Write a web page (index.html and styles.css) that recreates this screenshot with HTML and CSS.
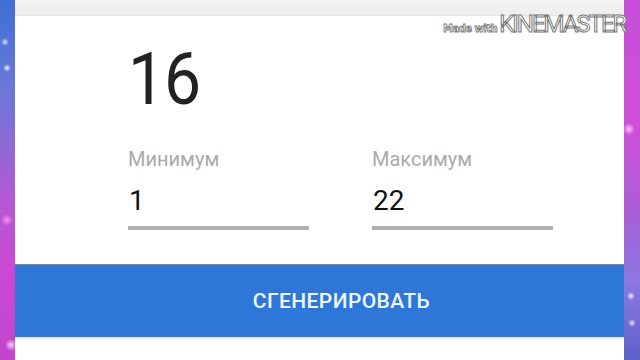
FILE: index.html
```html
<!DOCTYPE html>
<html lang="ru">
<head>
<meta charset="utf-8">
<title>Генератор</title>
<link rel="stylesheet" href="styles.css">
</head>
<body>
<div class="screen">
  <div class="side side-left"></div>
  <main class="app">
    <div class="topbar"></div>
    <section class="content">
      <div class="result">16</div>
      <div class="fields">
        <div class="field">
          <div class="label">Минимум</div>
          <div class="value">1</div>
          <div class="underline"></div>
        </div>
        <div class="field">
          <div class="label">Максимум</div>
          <div class="value">22</div>
          <div class="underline"></div>
        </div>
      </div>
    </section>
    <button class="generate">СГЕНЕРИРОВАТЬ</button>
    <div class="bottom"></div>
  </main>
  <div class="side side-right"></div>
  <div class="watermark"><span class="wm-small">Made with</span><span class="wm-big">KINEMASTER</span></div>
</div>
</body>
</html>
```

FILE: styles.css
```css
html, body {
  margin: 0;
  padding: 0;
  width: 640px;
  height: 360px;
  overflow: hidden;
  background: #fff;
  font-family: Roboto, "Noto Sans", Arial, sans-serif;
}
.screen {
  position: relative;
  display: flex;
  width: 640px;
  height: 360px;
}
.side {
  flex: none;
  height: 360px;
}
.side-left {
  width: 15px;
  background:
    radial-gradient(circle at 5px 42px, rgba(255,255,255,0.75) 0, rgba(255,255,255,0) 4px),
    radial-gradient(circle at 7px 68px, rgba(255,255,255,0.9) 0, rgba(255,255,255,0) 4px),
    radial-gradient(circle at 7px 220px, rgba(255,160,255,0.8) 0, rgba(255,160,255,0) 6px),
    radial-gradient(circle at 11px 345px, rgba(255,220,255,0.9) 0, rgba(255,220,255,0) 6px),
    linear-gradient(to bottom, #3f6fd6 0%, #6a78d8 25%, #b25ad4 55%, #cc48d0 75%, #c245cc 100%);
}
.side-right {
  width: 16px;
  background:
    radial-gradient(circle at 5px 129px, rgba(255,200,255,0.9) 0, rgba(255,200,255,0) 6px),
    radial-gradient(circle at 7px 296px, rgba(255,255,255,0.9) 0, rgba(255,255,255,0) 4px),
    radial-gradient(circle at 8px 323px, rgba(255,255,255,0.8) 0, rgba(255,255,255,0) 4px),
    linear-gradient(to bottom, #c64fd8 0%, #cd50d6 35%, #a860d6 60%, #8c78e0 78%, #5d62c8 100%);
}
.app {
  flex: 1;
  display: flex;
  flex-direction: column;
  background: #fff;
}
.topbar {
  height: 15px;
  background: linear-gradient(to bottom, #f4f4f4, #eeeeee);
  border-bottom: 1px solid #e4e4e4;
  flex: none;
}
.content {
  flex: none;
  height: 249px;
  padding-left: 113px;
  border-bottom: 1px solid #a08a60;
  box-sizing: border-box;
}
.result {
  margin-top: 29px;
  font-size: 66px;
  line-height: 73px;
  color: #222;
  transform: scaleY(1.1);
  transform-origin: 0 62px;
  letter-spacing: -1px;
}
.fields {
  display: flex;
  gap: 63px;
  margin-top: 31px;
}
.field {
  width: 181px;
}
.label {
  font-size: 20px;
  line-height: 20px;
  color: #aaaaaa;
}
.value {
  margin-top: 18px;
  font-size: 28px;
  line-height: 28px;
  color: #111;
  padding-left: 1px;
}
.underline {
  margin-top: 11px;
  height: 4px;
  background: #b0b0b0;
}
.generate {
  flex: none;
  height: 72px;
  margin: 0;
  padding: 0 0 0 44px;
  border: 0;
  background: #2f76d9;
  color: #eef6ff;
  font-family: Roboto, "Noto Sans", Arial, sans-serif;
  font-weight: 500;
  font-size: 21px;
  letter-spacing: 0.4px;
  text-align: center;
}
.bottom {
  flex: 1;
  background: #fff;
  border-top: 2px solid #d8ecff;
}
.watermark {
  position: absolute;
  top: 12px;
  left: 443px;
  display: flex;
  align-items: baseline;
  white-space: nowrap;
}
.wm-small {
  font-family: "DejaVu Sans", sans-serif;
  font-weight: bold;
  font-size: 10px;
  color: #fff;
  -webkit-text-stroke: 0.8px #777;
  letter-spacing: -0.5px;
  margin-right: 2px;
}
.wm-big {
  font-family: Roboto, sans-serif;
  font-size: 24px;
  line-height: 24px;
  color: #fff;
  -webkit-text-stroke: 1px #777;
  letter-spacing: -2px;
}
```
